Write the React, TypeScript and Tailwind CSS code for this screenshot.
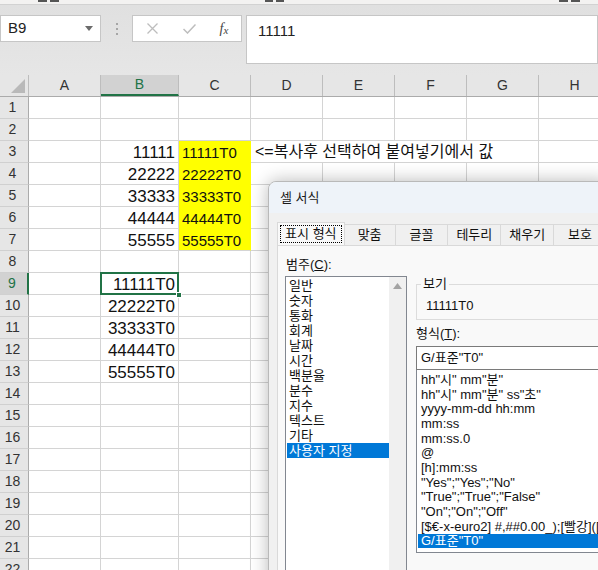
import React from 'react';

const FONT = 'font-[family-name:Liberation_Sans,Noto_Sans_CJK_KR,sans-serif]';

type Col = { k: string; w: string };
const COLS: Col[] = [
  { k: 'A', w: 'w-[72px]' },
  { k: 'B', w: 'w-[78px]' },
  { k: 'C', w: 'w-[72px]' },
  { k: 'D', w: 'w-[72px]' },
  { k: 'E', w: 'w-[72px]' },
  { k: 'F', w: 'w-[72px]' },
  { k: 'G', w: 'w-[72px]' },
  { k: 'H', w: 'w-[72px]' },
];

const bVals: Record<number, string> = { 3: '11111', 4: '22222', 5: '33333', 6: '44444', 7: '55555', 9: '11111T0', 10: '22222T0', 11: '33333T0', 12: '44444T0', 13: '55555T0' };
const cVals: Record<number, string> = { 3: '11111T0', 4: '22222T0', 5: '33333T0', 6: '44444T0', 7: '55555T0' };

function Cell({ col, row }: { col: Col; row: number }) {
  const isYellow = col.k === 'C' && row >= 3 && row <= 7;
  const noRight = row === 3 && (col.k === 'D' || col.k === 'E' || col.k === 'F');
  let border = 'border-r border-b border-[#d4d4d4]';
  if (isYellow) border = row === 7 ? 'border-r border-b border-r-[#ffff00] border-b-[#d4d4d4]' : 'border-r border-b border-[#ffff00]';
  if (noRight) border = 'border-b border-[#d4d4d4]';
  const sel = col.k === 'B' && row === 9;
  return (
    <div className={`${col.w} shrink-0 h-[22px] relative ${border} ${isYellow ? 'bg-[#ffff00]' : ''}`}>
      {col.k === 'B' && bVals[row] && (
        <div className="absolute inset-0 flex items-center justify-end pr-[3px] pt-[1px] text-[17px] text-[#111] leading-none">{bVals[row]}</div>
      )}
      {col.k === 'C' && cVals[row] && (
        <div className="absolute inset-0 flex items-center pl-[3px] pt-[1px] text-[15px] text-[#111] leading-none">{cVals[row]}</div>
      )}
      {col.k === 'D' && row === 3 && (
        <div className="absolute left-[4px] top-0 h-full flex items-center whitespace-nowrap text-[16px] text-[#111] leading-none z-10">
          {'<=복사후 선택하여 붙여넣기에서 값'}
        </div>
      )}
      {sel && (
        <>
          <div className="absolute left-[-1px] top-[-1px] right-[-1px] bottom-[-1px] border-2 border-[#217346] z-10" />
          <div className="absolute right-[-4px] bottom-[-4px] w-[6px] h-[6px] bg-[#217346] border border-white z-20" />
        </>
      )}
    </div>
  );
}

const categories = ['일반', '숫자', '통화', '회계', '날짜', '시간', '백분율', '분수', '지수', '텍스트', '기타', '사용자 지정'];
const formats = [
  'hh"시" mm"분"',
  'hh"시" mm"분" ss"초"',
  'yyyy-mm-dd hh:mm',
  'mm:ss',
  'mm:ss.0',
  '@',
  '[h]:mm:ss',
  '"Yes";"Yes";"No"',
  '"True";"True";"False"',
  '"On";"On";"Off"',
  '[$€-x-euro2] #,##0.00_);[빨강]([$€-x-euro2] #,##0.00)',
  'G/표준"T0"',
];

function Dialog() {
  return (
    <div className="absolute left-[268px] top-[181px] w-[340px] h-[420px] rounded-tl-[8px] border border-[#b9b9b9] bg-[#f0f0f0] shadow-[0_0_18px_rgba(0,0,0,0.28)] overflow-hidden">
      <div className="h-[31px] bg-[#eef3f9] flex items-center pl-[11px] text-[13px] text-[#1a1a1a]">셀 서식</div>
      <div className="pl-[8px] pt-[9px]">
        <div className="flex items-end h-[23px]">
          <div className="w-[69px] h-[23px] bg-[#f9f9f9] border border-b-0 border-[#d9d9d9] p-[2px] relative z-10">
            <div className="w-full h-full border border-dotted border-black flex items-center justify-center text-[13px] text-[#111]">표시 형식</div>
          </div>
          {[
            ['맞춤', 'w-[52px]'],
            ['글꼴', 'w-[54px]'],
            ['테두리', 'w-[54px]'],
            ['채우기', 'w-[54px]'],
            ['보호', 'w-[54px]'],
          ].map(([t, w]) => (
            <div key={t} className={`${w} h-[21px] bg-[#f0f0f0] border border-l-0 border-b-0 border-[#d9d9d9] flex items-center justify-center text-[13px] text-[#111]`}>{t}</div>
          ))}
        </div>
        <div className="h-[400px] bg-[#f9f9f9] border border-[#d9d9d9] flex pl-[7px] pt-[11px] gap-[9px]">
          <div className="w-[122px] shrink-0">
            <div className="h-[16px] flex items-center text-[13px] text-[#111] pl-[1px] mb-[3px]">
              범주(<span className="underline">C</span>):
            </div>
            <div className="w-[122px] h-[320px] border border-[#828790] bg-white flex">
              <div className="flex-1 pt-[1px] pl-[1px]">
                {categories.map((c, i) => (
                  <div
                    key={c}
                    className={`h-[15px] flex items-center pl-[2px] text-[13px] leading-none ${i === categories.length - 1 ? 'bg-[#0078d7] text-white' : 'text-[#111]'}`}
                  >
                    {c}
                  </div>
                ))}
              </div>
              <div className="w-[17px] bg-[#f0f0f0] flex justify-center pt-[6px]">
                <svg width="9" height="6" viewBox="0 0 9 6"><path d="M0 6 L4.5 0 L9 6 Z" fill="#a3a3a3" /></svg>
              </div>
            </div>
          </div>
          <div className="flex-1 pt-[27px]">
            <div className="relative h-[36px] border border-[#dcdcdc]">
              <div className="absolute left-[4px] top-[-9px] px-[2px] bg-[#f9f9f9] text-[13px] leading-[16px] text-[#111]">보기</div>
              <div className="absolute left-[9px] top-[13px] text-[13px] leading-[16px] text-[#111]">11111T0</div>
            </div>
            <div className="h-[16px] mt-[6px] flex items-center text-[13px] text-[#111]">
              형식(<span className="underline">T</span>):
            </div>
            <div className="mt-[4px] h-[24px] border border-[#7a7a7a] bg-white flex items-center pl-[4px] text-[13px] text-[#111]">G/표준"T0"</div>
            <div className="h-[183px] border border-t-0 border-[#828790] bg-white pt-[2px] pl-[1px]">
              {formats.map((f, i) => (
                <div
                  key={f}
                  className={`h-[14.7px] flex items-center pl-[3px] whitespace-nowrap text-[13px] leading-none ${i === formats.length - 1 ? 'bg-[#0078d7] text-white' : 'text-[#111]'}`}
                >
                  {f}
                </div>
              ))}
            </div>
          </div>
        </div>
      </div>
    </div>
  );
}

export default function App() {
  const rows = Array.from({ length: 22 }, (_, i) => i + 1);
  return (
    <div className={`w-[598px] h-[570px] overflow-hidden relative bg-white ${FONT}`}>
      <div className="h-[5px] bg-[#f3f2f1] border-b border-[#d2d2d2] relative">
        <div className="absolute left-[38px] top-0 flex gap-[3px]">
          <div className="w-[9px] h-[2px] bg-[#555]" />
          <div className="w-[9px] h-[2px] bg-[#555]" />
        </div>
        <div className="absolute left-[265px] top-0 flex gap-[3px]">
          <div className="w-[8px] h-[2px] bg-[#555]" />
          <div className="w-[8px] h-[2px] bg-[#555]" />
        </div>
        <div className="absolute left-[559px] top-0 flex gap-[3px]">
          <div className="w-[9px] h-[2px] bg-[#555]" />
          <div className="w-[9px] h-[2px] bg-[#555]" />
        </div>
      </div>
      <div className="h-[70px] bg-gradient-to-b from-[#e0e0e0] to-[#e6e6e6] flex items-start pt-[10px]">
        <div className="w-[101px] h-[27px] bg-white border border-[#c6c6c6] flex items-center justify-between pl-[7px] pr-[7px] text-[15px] text-[#222]">
          <span>B9</span>
          <svg width="8" height="5" viewBox="0 0 8 5"><path d="M0 0 L8 0 L4 5 Z" fill="#6b6b6b" /></svg>
        </div>
        <div className="w-[31px] h-[27px] flex flex-col items-center justify-center gap-[3px]">
          <div className="w-[2px] h-[2px] bg-[#a6a6a6]" />
          <div className="w-[2px] h-[2px] bg-[#a6a6a6]" />
          <div className="w-[2px] h-[2px] bg-[#a6a6a6]" />
        </div>
        <div className="w-[110px] h-[27px] bg-white border border-[#c6c6c6] flex items-center">
          <div className="w-[38px] flex justify-center pl-[1px]">
            <svg width="11" height="11" viewBox="0 0 11 11"><path d="M0.5 0.5 L10.5 10.5 M10.5 0.5 L0.5 10.5" stroke="#bdbdbd" strokeWidth="1.3" /></svg>
          </div>
          <div className="w-[36px] flex justify-center">
            <svg width="13" height="10" viewBox="0 0 13 10"><path d="M0.5 5 L4.5 9 L12.5 0.5" stroke="#bdbdbd" strokeWidth="1.5" fill="none" /></svg>
          </div>
          <div className="w-[34px] flex justify-center font-[family-name:Liberation_Serif,serif] italic text-[14px] text-[#444] leading-none">
            <span>f</span><span className="text-[11px] mt-[3px]">x</span>
          </div>
        </div>
        <div className="ml-[4px] flex-1 h-[49px] bg-white border border-[#c6c6c6] pl-[11px] pt-[4px] text-[15px] text-[#222]">11111</div>
      </div>
      <div className="flex h-[22px] bg-[#e6e6e6] border-b border-[#ababab]">
        <div className="w-[29px] shrink-0 h-full border-r border-[#bdbdbd] relative">
          <svg className="absolute right-[3px] bottom-[3px]" width="14" height="14" viewBox="0 0 14 14"><path d="M14 0 L14 14 L0 14 Z" fill="#b9b9b9" /></svg>
        </div>
        {COLS.map((c) => (
          <div
            key={c.k}
            className={`${c.w} shrink-0 h-full flex items-center justify-center text-[14px] border-r border-[#bdbdbd] ${c.k === 'B' ? 'bg-[#d2d2d2] text-[#217346] border-b-2 border-b-[#217346]' : 'text-[#333]'}`}
          >
            {c.k}
          </div>
        ))}
      </div>
      {rows.map((r) => (
        <div key={r} className="flex">
          <div
            className={`w-[29px] shrink-0 h-[22px] flex items-center justify-center pr-[3px] text-[14px] border-b border-[#d0d0d0] ${r === 9 ? 'bg-[#d2d2d2] text-[#217346] border-r-2 border-r-[#217346]' : 'bg-[#e6e6e6] text-[#333] border-r border-r-[#ababab]'}`}
          >
            {r}
          </div>
          {COLS.map((c) => (
            <Cell key={c.k} col={c} row={r} />
          ))}
        </div>
      ))}
      <Dialog />
    </div>
  );
}
